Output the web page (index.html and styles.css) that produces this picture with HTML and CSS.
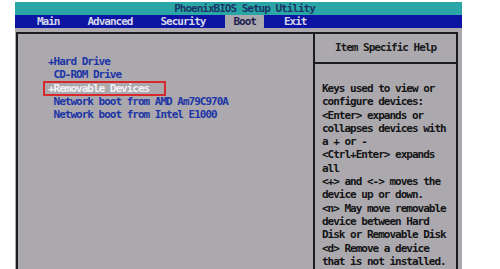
FILE: index.html
```html
<!DOCTYPE html>
<html>
	<head>
		<meta charset="utf-8">
		<title>PhoenixBIOS Setup Utility</title>
		<link rel="stylesheet" href="styles.css">
	</head>
	<body>
		<div class="screen">
			<div class="titleBar">PhoenixBIOS Setup Utility</div>
			<!-- 菜单栏 -->
			<ul class="menuBar">
				<li>Main</li>
				<li>Advanced</li>
				<li>Security</li>
				<li class="active">Boot</li>
				<li>Exit</li>
			</ul>
			<div class="main">
				<div class="box">
					<!-- 启动顺序 -->
					<div class="bootList">
						<div class="item">+Hard Drive</div>
						<div class="item"> CD-ROM Drive</div>
						<div class="item"><span class="selected">+Removable Devices</span></div>
						<div class="item"> Network boot from AMD Am79C970A</div>
						<div class="item"> Network boot from Intel E1000</div>
					</div>
					<!-- 帮助 -->
					<div class="helpPanel">
						<div class="helpTitle">Item Specific Help</div>
						<div class="helpText">Keys used to view or
configure devices:
&lt;Enter&gt; expands or
collapses devices with
a + or -
&lt;Ctrl+Enter&gt; expands
all
&lt;+&gt; and &lt;-&gt; moves the
device up or down.
&lt;n&gt; May move removable
device between Hard
Disk or Removable Disk
&lt;d&gt; Remove a device
that is not installed.</div>
					</div>
				</div>
			</div>
		</div>
	</body>
</html>
```

FILE: styles.css
```css
* {
	margin: 0;
	padding: 0;
	box-sizing: border-box;
}
body {
	background-color: #fff;
	height: 269px;
	overflow: hidden;
	font-family: "DejaVu Sans Mono", "Liberation Mono", monospace;
	font-size: 11px;
	font-weight: bold;
	letter-spacing: -1px;
}
.screen {
	width: 447px;
	margin-left: 15px;
	padding-top: 2px;
	height: 269px;
	display: flex;
	flex-direction: column;
}
.titleBar {
	height: 13px;
	line-height: 13px;
	background-color: #2ba6a6;
	color: #1b3566;
	text-align: center;
	padding-left: 12px;
}
.menuBar {
	height: 13px;
	line-height: 13px;
	background-color: #0c14a2;
	color: #d4d6ec;
	list-style: none;
	display: flex;
	gap: 12px;
	padding-left: 14px;
}
.menuBar li {
	padding: 0 8px;
}
.menuBar .active {
	background-color: #aba9ad;
	color: #1e2050;
}
.main {
	flex: 1;
	min-height: 0;
	background-color: #aba9ad;
	padding: 4px 4px 0 1px;
	display: flex;
}
.box {
	flex: 1;
	min-width: 0;
	border: 2px solid #1c1c1e;
	border-bottom: none;
	display: flex;
}
.bootList {
	width: 297px;
	flex-shrink: 0;
	border-right: 2px solid #1c1c1e;
	padding: 21px 0 0 30px;
}
.item {
	height: 13.3px;
	line-height: 13.3px;
	white-space: pre;
	color: #1d35a6;
}
.selected {
	display: inline-block;
	height: 15px;
	line-height: 11px;
	color: #f2f2f6;
	border: 2px solid #d42a2e;
	padding: 0 15px 0 3px;
	margin-left: -5px;
	margin-top: -1px;
}
.helpPanel {
	flex: 1;
	min-width: 0;
}
.helpTitle {
	height: 30px;
	line-height: 28px;
	border-bottom: 2px solid #1c1c1e;
	color: #18181a;
	text-align: center;
}
.helpText {
	padding: 18px 0 0 7px;
	line-height: 13.3px;
	white-space: pre;
	color: #141416;
}
```
